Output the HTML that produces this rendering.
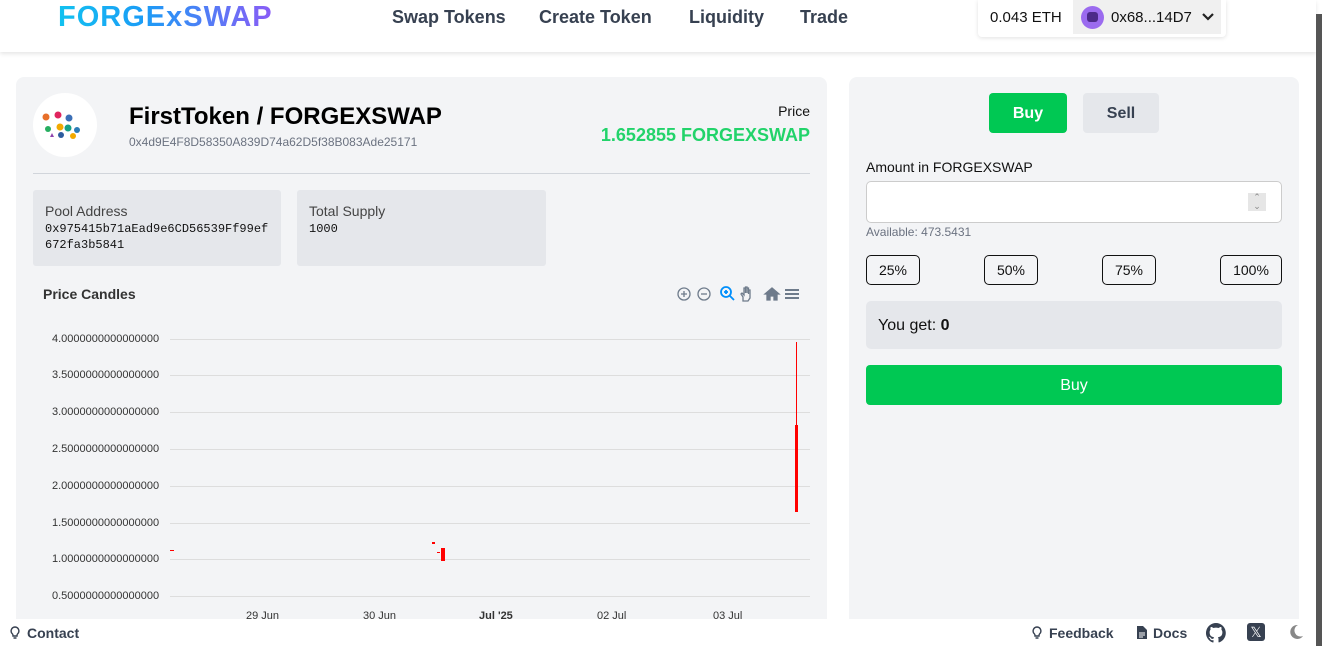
<!DOCTYPE html>
<html><head><meta charset="utf-8"><style>
*{box-sizing:border-box;margin:0;padding:0}
body{width:1322px;height:646px;overflow:hidden;background:#fff;font-family:"Liberation Sans",sans-serif;position:relative;color:#111}
.hdr{position:absolute;left:0;top:0;width:1316px;height:52px;background:#fff;box-shadow:0 2px 4px rgba(0,0,0,.1)}
.logo{position:absolute;left:58px;top:1px;font-size:29px;font-weight:bold;letter-spacing:1px;background:linear-gradient(90deg,#12c2f0,#1b9cf6 40%,#8b5cf6);-webkit-background-clip:text;color:transparent}
.nav{position:absolute;top:7px;font-size:18px;font-weight:bold;color:#374151}
.wallet{position:absolute;left:978px;top:0;width:248px;height:37px;background:#fff;box-shadow:0 1px 4px rgba(0,0,0,.12);border-radius:0 0 4px 4px}
.scroll{position:absolute;left:1316px;top:14px;width:6px;height:632px;background:#555}
.panel{position:absolute;background:#f3f4f6;border-radius:8px}
.box{position:absolute;background:#e5e7eb;border-radius:3px;padding:13px 12px}
.mono{font-family:"Liberation Mono",monospace;font-size:12px;color:#111;line-height:16px;word-break:break-all}
.ylab{position:absolute;left:52px;font-size:11px;color:#333}
.grid{position:absolute;left:170px;width:640px;height:1px;background:#ddd}
.pct{position:absolute;top:255px;height:30px;border:1px solid #111;border-radius:5px;font-size:14px;text-align:center;line-height:28px;background:#f3f4f6}
.foot{position:absolute;left:0;top:619px;width:1316px;height:27px;background:#fff;font-size:14px;font-weight:bold;color:#374151}
</style></head><body>
<div class="hdr">
<div class="logo">FORGExSWAP</div>
<div class="nav" style="left:392px">Swap Tokens</div>
<div class="nav" style="left:539px">Create Token</div>
<div class="nav" style="left:689px">Liquidity</div>
<div class="nav" style="left:800px">Trade</div>
<div class="wallet">
<div style="position:absolute;left:12px;top:9px;font-size:15px">0.043 ETH</div>
<div style="position:absolute;left:95px;top:0;width:148px;height:34px;background:#f0f0f0"></div>
<div style="position:absolute;left:103px;top:6px;width:23px;height:23px;border-radius:50%;background:#9b6bef"><div style="position:absolute;left:6px;top:6px;width:11px;height:10px;background:#4c2a8a;border-radius:3px"></div></div>
<div style="position:absolute;left:133px;top:9px;font-size:15px">0x68...14D7</div>
<svg style="position:absolute;left:224px;top:13px" width="12" height="8"><path d="M1 1l5 5 5-5" stroke="#222" stroke-width="2.2" fill="none"/></svg>
</div>
</div>
<div class="scroll"></div>

<div class="panel" style="left:16px;top:77px;width:811px;height:560px">
<div style="position:absolute;left:17px;top:16px;width:64px;height:64px;border-radius:50%;background:#fff">
<svg width="64" height="64"><circle cx="13" cy="24" r="3.5" fill="#e76f2a"/><circle cx="25" cy="22" r="3.5" fill="#e0245e"/><circle cx="36" cy="25" r="3.5" fill="#3b6fb6"/><circle cx="15" cy="36" r="3" fill="#27ae60"/><circle cx="27" cy="34" r="3.5" fill="#f2a900"/><circle cx="35" cy="35" r="3.5" fill="#16a085"/><circle cx="44" cy="37" r="3" fill="#2c7bb6"/><circle cx="28" cy="42" r="3" fill="#2e5c9e"/><circle cx="40" cy="43" r="3" fill="#f2a900"/><path d="M17 44l2-4 2 4z" fill="#8e44ad"/></svg></div>
<div style="position:absolute;left:113px;top:26px;font-size:24px;font-weight:bold;color:#000">FirstToken / FORGEXSWAP</div>
<div style="position:absolute;left:113px;top:58px;font-size:12px;color:#6b7280">0x4d9E4F8D58350A839D74a62D5f38B083Ade25171</div>
<div style="position:absolute;right:17px;top:26px;font-size:14px;color:#111">Price</div>
<div style="position:absolute;right:17px;top:48px;font-size:18px;font-weight:bold;color:#22d36a">1.652855 FORGEXSWAP</div>
<div style="position:absolute;left:17px;top:96px;width:777px;height:1px;background:#d1d5db"></div>
<div class="box" style="left:17px;top:113px;width:248px;height:76px"><div style="font-size:14px;color:#444;margin-bottom:2px">Pool Address</div><div class="mono">0x975415b71aEad9e6CD56539Ff99ef672fa3b5841</div></div>
<div class="box" style="left:281px;top:113px;width:249px;height:76px"><div style="font-size:14px;color:#444;margin-bottom:2px">Total Supply</div><div class="mono">1000</div></div>
<div style="position:absolute;left:27px;top:209px;font-size:14px;font-weight:bold;color:#333">Price Candles</div>
<svg style="position:absolute;left:660px;top:208px" width="125" height="18" fill="none" stroke="#6e7b8b" stroke-width="1.3">
<circle cx="8" cy="9" r="6"/><path d="M5 9h6M8 6v6"/>
<circle cx="28" cy="9" r="6"/><path d="M25 9h6"/>
<g stroke="#008ffb" stroke-width="1.8"><circle cx="50" cy="7" r="5"/><path d="M54 11l4 4M48 7h4M50 5v4"/></g>
<path d="M67 16v-4l-2-3 1-1 2 2V3h1.5v5V2h1.5v6V3h1.5v6V5h1.5v8l-2 3z"/>
<path d="M89 9l7-6 7 6h-2v6h-3v-4h-4v4h-3V9z" fill="#6e7b8b"/>
<path d="M109 5h14M109 9h14M109 13h14" stroke-width="2"/>
</svg>
</div>

<div class="grid" style="top:339px"></div><div class="grid" style="top:375px"></div><div class="grid" style="top:412px"></div><div class="grid" style="top:449px"></div><div class="grid" style="top:486px"></div><div class="grid" style="top:523px"></div><div class="grid" style="top:559px"></div><div class="grid" style="top:596px"></div>
<div class="ylab" style="top:333px">4.0000000000000000</div>
<div class="ylab" style="top:369px">3.5000000000000000</div>
<div class="ylab" style="top:406px">3.0000000000000000</div>
<div class="ylab" style="top:443px">2.5000000000000000</div>
<div class="ylab" style="top:480px">2.0000000000000000</div>
<div class="ylab" style="top:517px">1.5000000000000000</div>
<div class="ylab" style="top:553px">1.0000000000000000</div>
<div class="ylab" style="top:590px">0.5000000000000000</div>
<div style="position:absolute;left:170px;top:550px;width:4px;height:1px;background:red"></div>
<div style="position:absolute;left:432px;top:542px;width:3px;height:2px;background:red"></div>
<div style="position:absolute;left:437px;top:552px;width:3px;height:1px;background:red"></div>
<div style="position:absolute;left:441px;top:548px;width:4px;height:13px;background:red"></div>
<div style="position:absolute;left:796px;top:342px;width:1px;height:170px;background:red"></div>
<div style="position:absolute;left:795px;top:425px;width:3px;height:87px;background:red"></div>
<div style="position:absolute;left:246px;top:610px;font-size:11px;color:#333">29 Jun</div>
<div style="position:absolute;left:363px;top:610px;font-size:11px;color:#333">30 Jun</div>
<div style="position:absolute;left:479px;top:610px;font-size:11px;color:#333;font-weight:bold">Jul '25</div>
<div style="position:absolute;left:597px;top:610px;font-size:11px;color:#333">02 Jul</div>
<div style="position:absolute;left:713px;top:610px;font-size:11px;color:#333">03 Jul</div>

<div class="panel" style="left:849px;top:77px;width:450px;height:560px">
<div style="position:absolute;left:140px;top:16px;width:78px;height:40px;background:#00c853;border-radius:4px;color:#fff;font-weight:bold;font-size:16px;text-align:center;line-height:42px">Buy</div>
<div style="position:absolute;left:234px;top:16px;width:76px;height:40px;background:#e5e7eb;border-radius:4px;color:#374151;font-weight:bold;font-size:16px;text-align:center;line-height:42px">Sell</div>
<div style="position:absolute;left:17px;top:82px;font-size:14px">Amount in FORGEXSWAP</div>
<div style="position:absolute;left:17px;top:104px;width:416px;height:42px;background:#fff;border:1px solid #ccc;border-radius:5px"><div style="position:absolute;right:15px;top:11px;width:18px;height:18px;background:#e6e6e6;font-size:9px;color:#888;text-align:center;line-height:9px">⌃<br>⌄</div></div>
<div style="position:absolute;left:17px;top:148px;font-size:12px;color:#6b7280">Available: 473.5431</div>
</div>
<div class="pct" style="left:866px;width:54px">25%</div>
<div class="pct" style="left:984px;width:54px">50%</div>
<div class="pct" style="left:1102px;width:54px">75%</div>
<div class="pct" style="left:1220px;width:62px">100%</div>
<div style="position:absolute;left:866px;top:301px;width:416px;height:48px;background:#e5e7eb;border-radius:5px;font-size:16px;padding:16px 12px">You get: <b>0</b></div>
<div style="position:absolute;left:866px;top:365px;width:416px;height:40px;background:#00c853;border-radius:4px;color:#fff;font-size:16px;text-align:center;line-height:42px">Buy</div>

<div class="foot">
<svg style="position:absolute;left:10px;top:7px" width="10" height="14" fill="none" stroke="#374151" stroke-width="1.4"><path d="M5 1a4 4 0 0 0-2.5 7c.5.5.5 1 .5 2h4c0-1 0-1.5.5-2A4 4 0 0 0 5 1zM3.5 12h3"/></svg>
<div style="position:absolute;left:27px;top:6px">Contact</div>
<svg style="position:absolute;left:1032px;top:7px" width="10" height="14" fill="none" stroke="#374151" stroke-width="1.4"><path d="M5 1a4 4 0 0 0-2.5 7c.5.5.5 1 .5 2h4c0-1 0-1.5.5-2A4 4 0 0 0 5 1zM3.5 12h3"/></svg>
<div style="position:absolute;left:1049px;top:6px">Feedback</div>
<svg style="position:absolute;left:1137px;top:7px" width="10" height="13"><path d="M0 0h6l4 4v9H0z" fill="#374151"/><path d="M2 7h6M2 9h6M2 11h4" stroke="#fff" stroke-width="1"/></svg>
<div style="position:absolute;left:1153px;top:6px">Docs</div>
<svg style="position:absolute;left:1206px;top:4px" width="20" height="20" viewBox="0 0 16 16"><path fill="#374151" d="M8 0a8 8 0 0 0-2.5 15.6c.4 0 .5-.2.5-.4v-1.5c-2.2.5-2.7-1-2.7-1-.4-.9-.9-1.2-.9-1.2-.7-.5.1-.5.1-.5.8.1 1.200.8 1.200.8.700 1.300 1.900.9 2.300.7.1-.5.3-.9.5-1.100-1.800-.2-3.600-.9-3.600-4 0-.9.3-1.600.8-2.100-.1-.2-.4-1 .1-2.100 0 0 .7-.2 2.200.8a7.400 7.400 0 0 1 4 0c1.500-1 2.200-.8 2.200-.8.400 1.100.2 1.900.1 2.100.5.600.8 1.300.8 2.100 0 3.100-1.900 3.800-3.600 4 .3.300.5.800.5 1.500v2.200c0 .2.1.5.6.4A8 8 0 0 0 8 0z"/></svg>
<div style="position:absolute;left:1247px;top:4px;width:18px;height:18px;background:#374151;border-radius:3px;color:#fff;font-size:14px;text-align:center;line-height:18px;font-weight:normal">𝕏</div>
<svg style="position:absolute;left:1288px;top:5px" width="16" height="16"><path d="M10 1a7 7 0 1 0 5 11A6 6 0 0 1 10 1z" fill="#888"/></svg>
</div>
</body></html>
